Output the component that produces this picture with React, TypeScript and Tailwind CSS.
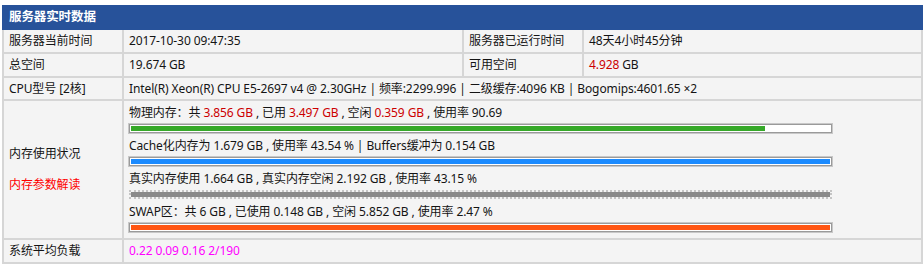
import React from "react";

const font = { fontFamily: '"Noto Sans", "Noto Sans CJK SC", sans-serif' };

function Bar({ pct, color, dotted }: { pct: number; color: string; dotted?: boolean }) {
  return (
    <div
      className={
        dotted
          ? "w-[703px] h-[9px] border-2 border-dotted border-[#c4c4c4] bg-[#f4f4f4]"
          : "w-[703px] h-[9px] border border-[#9a9a9a] bg-white p-px shadow-[0_0_0_1px_#c8c8c8]"
      }
    >
      <div className={dotted ? "h-full bg-[#8a8a8a]" : "h-full"} style={{ width: `${pct}%`, background: dotted ? undefined : color }} />
    </div>
  );
}

export default function App() {
  const cell = "bg-[#f4f4f4] px-[5px] flex items-center";
  return (
    <div className="bg-white w-[923px] h-[270px] pt-[5px] pl-[2px] text-[12px] text-[#141414] tracking-[-0.1px]" style={font}>
      <div className="w-[921px]">
        <div className="h-[25px] bg-[#27529a] text-white font-bold px-[7px] flex items-center text-[12.5px]">
          服务器实时数据
        </div>
        <div className="grid grid-cols-[118px_338px_118px_337px] grid-rows-[22px_22px_21px_137px_22px] gap-[2px] bg-[#d6d6d6] px-[2px] pb-[2px]">
          <div className={cell}>服务器当前时间</div>
          <div className={cell}>2017-10-30 09:47:35</div>
          <div className={cell}>服务器已运行时间</div>
          <div className={cell}>48天4小时45分钟</div>

          <div className={cell}>总空间</div>
          <div className={cell}>19.674 GB</div>
          <div className={cell}>可用空间</div>
          <div className={cell}>
            <span className="text-[#cc0000]">4.928</span>&nbsp;GB
          </div>

          <div className={cell}>CPU型号 [2核]</div>
          <div className={`${cell} col-span-3`}>
            Intel(R) Xeon(R) CPU E5-2697 v4 @ 2.30GHz | 频率:2299.996 | 二级缓存:4096 KB | Bogomips:4601.65 ×2
          </div>

          <div className="bg-[#f4f4f4] px-[5px] flex flex-col justify-center gap-[13px] leading-[18px]">
            <div>内存使用状况</div>
            <div className="text-[#ff0000]">内存参数解读</div>
          </div>
          <div className="bg-[#f4f4f4] px-[5px] col-span-3 pt-px flex flex-col gap-[2px]">
            <div>
              <div className="h-[22px] flex items-center whitespace-pre">
                物理内存：共 <span className="text-[#cc0000]">3.856 GB</span> , 已用 <span className="text-[#cc0000]">3.497 GB</span> , 空闲 <span className="text-[#cc0000]">0.359 GB</span> , 使用率 90.69
              </div>
              <Bar pct={90.69} color="#36a929" />
            </div>
            <div>
              <div className="h-[22px] flex items-center whitespace-pre">Cache化内存为 1.679 GB , 使用率 43.54 % | Buffers缓冲为 0.154 GB</div>
              <Bar pct={100} color="#1b8bff" />
            </div>
            <div>
              <div className="h-[22px] flex items-center whitespace-pre">真实内存使用 1.664 GB , 真实内存空闲 2.192 GB , 使用率 43.15 %</div>
              <Bar pct={100} color="#8a8a8a" dotted />
            </div>
            <div>
              <div className="h-[22px] flex items-center whitespace-pre">SWAP区：共 6 GB , 已使用 0.148 GB , 空闲 5.852 GB , 使用率 2.47 %</div>
              <Bar pct={100} color="#ff5512" />
            </div>
          </div>

          <div className={cell}>系统平均负载</div>
          <div className={`${cell} col-span-3 text-[#ff00ff]`}>0.22 0.09 0.16 2/190</div>
        </div>
      </div>
    </div>
  );
}
